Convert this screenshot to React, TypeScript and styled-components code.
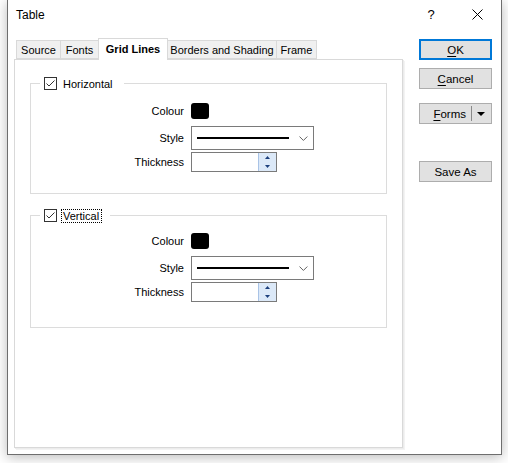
import React from 'react';
import styled, { createGlobalStyle } from 'styled-components';

const GlobalStyle = createGlobalStyle`
  html, body {
    margin: 0;
    padding: 0;
    background: #ffffff;
  }
  body {
    font-family: 'Liberation Sans', Arial, sans-serif;
    font-size: 11px;
    color: #000000;
  }
  #root {
    width: 508px;
    height: 463px;
    overflow: hidden;
  }
`;

const tabs = [
  { label: 'Source', width: 45 },
  { label: 'Fonts', width: 39 },
  { label: 'Grid Lines', width: 70, active: true },
  { label: 'Borders and Shading', width: 110 },
  { label: 'Frame', width: 41 }
];

const CheckIcon = () => (
  <svg width="13" height="13" viewBox="0 0 13 13">
    <rect x="0.5" y="0.5" width="12" height="12" fill="#fff" stroke="#333" />
    <path d="M2.5 6.5 L5 9 L10.5 3.5" fill="none" stroke="#333" strokeWidth="1" />
  </svg>
);

const CloseIcon = () => (
  <svg width="11" height="11" viewBox="0 0 11 11">
    <path d="M0.5 0.5 L10.5 10.5 M10.5 0.5 L0.5 10.5" stroke="#000" strokeWidth="1" />
  </svg>
);

const Chevron = () => (
  <svg width="9" height="5" viewBox="0 0 9 5">
    <path d="M0.5 0.5 L4.5 4.5 L8.5 0.5" fill="none" stroke="#606060" strokeWidth="1" />
  </svg>
);

const Arrow = ({ up }: { up?: boolean }) => (
  <svg width="5" height="3" viewBox="0 0 5 3">
    <path d={up ? 'M0 3 L2.5 0 L5 3 Z' : 'M0 0 L2.5 3 L5 0 Z'} fill="#1c3f7c" />
  </svg>
);

interface GroupProps {
  title: string;
  focused?: boolean;
  padTop: number;
  padBottom: number;
}

const LineGroup = ({ title, focused, padTop, padBottom }: GroupProps) => (
  <Group $padTop={padTop} $padBottom={padBottom}>
    <Legend>
      <CheckIcon />
      <LegendText $focused={focused}>{title}</LegendText>
    </Legend>
    <Row>
      <Label>Colour</Label>
      <Swatch />
    </Row>
    <Row $gap={7}>
      <Label>Style</Label>
      <Select>
        <SampleLine />
        <Chevron />
      </Select>
    </Row>
    <Row $gap={2}>
      <Label>Thickness</Label>
      <Spin>
        <SpinInput />
        <SpinButtons>
          <SpinHalf>
            <Arrow up />
          </SpinHalf>
          <SpinHalf>
            <Arrow />
          </SpinHalf>
        </SpinButtons>
      </Spin>
    </Row>
  </Group>
);

const App = () => {
  return (
    <>
      <GlobalStyle />
      <Window>
        <TitleBar>
          <Title>Table</Title>
          <Caption>
            <CaptionButton>?</CaptionButton>
            <CaptionButton>
              <CloseIcon />
            </CaptionButton>
          </Caption>
        </TitleBar>
        <Body>
          <LeftColumn>
            <TabStrip>
              {tabs.map((t) => (
                <Tab key={t.label} $width={t.width} $active={t.active}>
                  {t.label}
                </Tab>
              ))}
            </TabStrip>
            <Panel>
              <LineGroup title="Horizontal" padTop={13} padBottom={21} />
              <LineGroup title="Vertical" focused padTop={11} padBottom={25} />
            </Panel>
          </LeftColumn>
          <Buttons>
            <DialogButton $primary>
              <u>O</u>K
            </DialogButton>
            <DialogButton $gap={8}>
              <u>C</u>ancel
            </DialogButton>
            <SplitButton $gap={14}>
              <SplitText>
                <u>F</u>orms
              </SplitText>
              <SplitDivider />
              <SplitArrow />
            </SplitButton>
            <DialogButton $gap={37}>Save As</DialogButton>
          </Buttons>
        </Body>
      </Window>
    </>
  );
};

export default App;

const Window = styled.div`
  box-sizing: border-box;
  margin-left: 7px;
  width: 495px;
  height: 455px;
  background: #ffffff;
  border: 1px solid #6e6e6e;
  border-top: none;
  box-shadow: 0 2px 12px rgba(0, 0, 0, 0.28);
  display: flex;
  flex-direction: column;
`;

const TitleBar = styled.div`
  display: flex;
  align-items: center;
  justify-content: space-between;
  height: 31px;
  padding-left: 8px;
`;

const Title = styled.span`
  font-size: 12px;
  margin-top: -1px;
`;

const Caption = styled.div`
  display: flex;
  align-self: stretch;
`;

const CaptionButton = styled.div`
  width: 46px;
  display: flex;
  align-items: center;
  justify-content: center;
  font-size: 13px;
  margin-top: -2px;
  &:last-child {
    padding-right: 1px;
  }
`;

const Body = styled.div`
  display: flex;
  padding: 7px 0 0 6px;
`;

const LeftColumn = styled.div`
  display: flex;
  flex-direction: column;
  width: 391px;
`;

const TabStrip = styled.div`
  display: flex;
  align-items: flex-end;
  height: 21px;
  padding-left: 2px;
  position: relative;
  z-index: 1;
`;

const Tab = styled.div<{ $width: number; $active?: boolean }>`
  box-sizing: border-box;
  width: ${(p) => p.$width}px;
  height: ${(p) => (p.$active ? 22 : 19)}px;
  margin-left: -1px;
  margin-bottom: ${(p) => (p.$active ? -1 : 0)}px;
  display: flex;
  align-items: center;
  justify-content: center;
  border: 1px solid #d9d9d9;
  border-bottom: ${(p) => (p.$active ? 'none' : '1px solid #d9d9d9')};
  background: ${(p) => (p.$active ? '#ffffff' : '#f0f0f0')};
  font-weight: ${(p) => (p.$active ? 700 : 400)};
  padding-bottom: ${(p) => (p.$active ? 2 : 0)}px;
  white-space: nowrap;
  position: relative;
  z-index: ${(p) => (p.$active ? 2 : 1)};
  &:first-child {
    margin-left: 0;
  }
`;

const Panel = styled.div`
  box-sizing: border-box;
  width: 389px;
  height: 389px;
  border: 1px solid #d9d9d9;
  box-shadow: 1px 1px 0 #ececec, 2px 2px 0 #f3f3f3;
  padding: 17px 0 0 15px;
  display: flex;
  flex-direction: column;
  gap: 15px;
`;

const Group = styled.fieldset<{ $padTop: number; $padBottom: number }>`
  box-sizing: border-box;
  width: 357px;
  margin: 0;
  padding: ${(p) => p.$padTop}px 0 ${(p) => p.$padBottom}px 0;
  border: 1px solid #dcdcdc;
`;

const Legend = styled.legend`
  display: flex;
  align-items: center;
  gap: 5px;
  margin-left: 9px;
  padding: 0 8px 0 4px;
  height: 13px;
  line-height: 13px;
  font-size: 11px;
`;

const LegendText = styled.span<{ $focused?: boolean }>`
  padding: 0 2px 0 1px;
  margin-left: -1px;
  border: 1px dotted ${(p) => (p.$focused ? '#000' : 'transparent')};
  line-height: 12px;
`;

const Row = styled.div<{ $gap?: number }>`
  display: flex;
  align-items: center;
  gap: 7px;
  margin-top: ${(p) => p.$gap ?? 0}px;
`;

const Label = styled.span`
  width: 153px;
  text-align: right;
  font-size: 11px;
`;

const Swatch = styled.div`
  width: 18px;
  height: 16px;
  background: #000;
  border-radius: 3px;
`;

const Select = styled.div`
  box-sizing: border-box;
  width: 123px;
  height: 24px;
  border: 1px solid #7a7a7a;
  display: flex;
  align-items: center;
  padding: 0 5px 0 5px;
  gap: 10px;
`;

const SampleLine = styled.div`
  width: 94px;
  height: 2px;
  background: #000;
`;

const Spin = styled.div`
  box-sizing: border-box;
  width: 86px;
  height: 20px;
  border: 1px solid #7a7a7a;
  display: flex;
`;

const SpinInput = styled.div`
  flex: 1;
`;

const SpinButtons = styled.div`
  width: 17px;
  display: flex;
  flex-direction: column;
  border-left: 1px solid #a9c3e6;
  background: #dce9f8;
`;

const SpinHalf = styled.div`
  flex: 1;
  display: flex;
  align-items: center;
  justify-content: center;
`;

const Buttons = styled.div`
  display: flex;
  flex-direction: column;
  margin-left: 14px;
  padding-top: 1px;
`;

const DialogButton = styled.div<{ $primary?: boolean; $gap?: number }>`
  box-sizing: border-box;
  width: 73px;
  height: 21px;
  margin-top: ${(p) => p.$gap ?? 0}px;
  background: #e1e1e1;
  border: ${(p) => (p.$primary ? '2px solid #0078d7' : '1px solid #adadad')};
  display: flex;
  align-items: center;
  justify-content: center;
  font-size: 11.5px;
  u {
    text-decoration-thickness: 1px;
    text-underline-offset: 2px;
  }
`;

const SplitButton = styled(DialogButton)`
  justify-content: flex-end;
  padding-right: 6px;
`;

const SplitText = styled.span`
  margin-right: 5px;
`;

const SplitDivider = styled.div`
  width: 1px;
  height: 15px;
  background: #8a8a8a;
  margin-right: 5px;
`;

const SplitArrow = styled.div`
  width: 0;
  height: 0;
  border-left: 4px solid transparent;
  border-right: 4px solid transparent;
  border-top: 4px solid #000;
`;
